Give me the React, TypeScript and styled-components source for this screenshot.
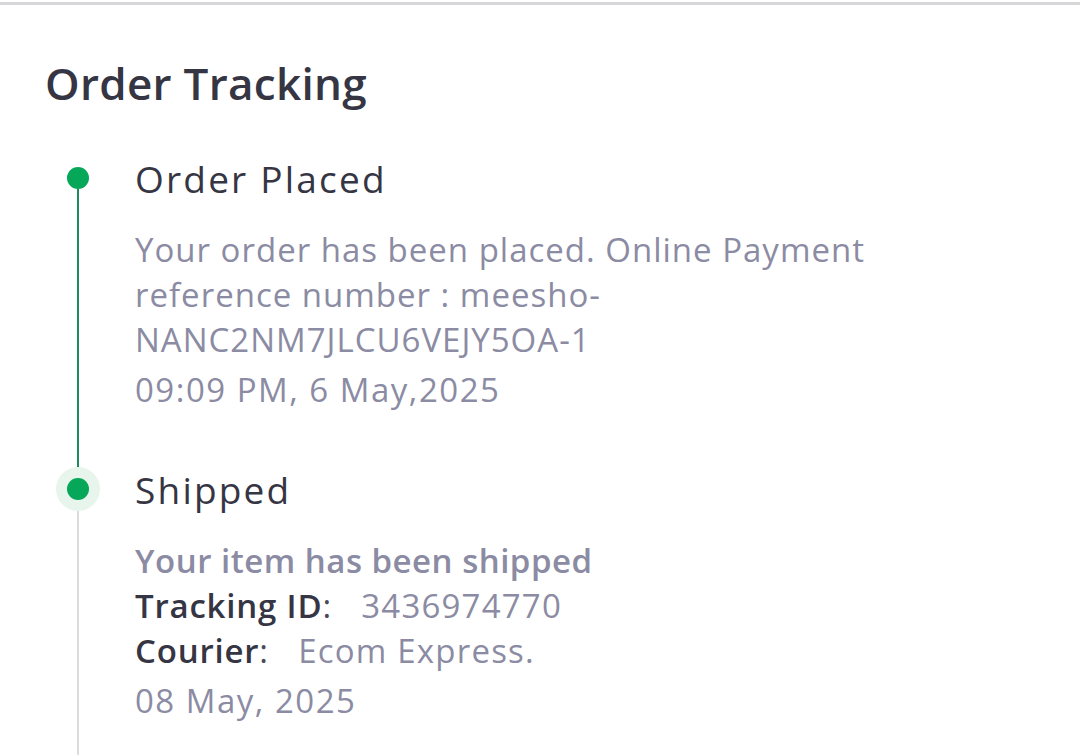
import styled, { createGlobalStyle } from "styled-components";

const GlobalStyle = createGlobalStyle`
  html, body {
    margin: 0;
    padding: 0;
    background: #ffffff;
  }
  body {
    font-family: "Open Sans", "Noto Sans", sans-serif;
    color: #353543;
  }
`;

const Page = styled.div`
  width: 1080px;
  min-height: 753px;
  border-top: 3px solid #d6d6d9;
  margin-top: 2px;
  box-sizing: border-box;
  padding: 50px 0 0 45px;
  overflow: hidden;
`;

const Title = styled.h1`
  margin: 0;
  font-size: 44px;
  line-height: 56px;
  font-weight: 600;
  letter-spacing: 0.3px;
  color: #353543;
`;

const Timeline = styled.div`
  display: flex;
  flex-direction: column;
  margin-top: 46px;
`;

const Step = styled.div`
  display: grid;
  grid-template-columns: 66px 1fr;
  column-gap: 24px;
`;

const Rail = styled.div`
  display: flex;
  flex-direction: column;
  align-items: center;
`;

const Segment = styled.div<{ $color: string; $height?: number }>`
  width: 2px;
  background: ${(p) => p.$color};
  ${(p) => (p.$height !== undefined ? `height: ${p.$height}px;` : "flex: 1;")}
`;

const Dot = styled.div<{ $halo?: boolean }>`
  width: 22px;
  height: 22px;
  border-radius: 50%;
  background: #06a759;
  flex-shrink: 0;
  box-shadow: ${(p) => (p.$halo ? "0 0 0 11px #e7f5ed" : "none")};
  position: relative;
  z-index: 1;
`;

const Body = styled.div<{ $pad: number }>`
  padding-bottom: ${(p) => p.$pad}px;
  max-width: 770px;
`;

const StepTitle = styled.div`
  font-size: 37px;
  line-height: 44px;
  font-weight: 500;
  letter-spacing: 2.2px;
  color: #353543;
`;

const Desc = styled.div<{ $strong?: boolean }>`
  margin-top: 26px;
  font-size: 33px;
  line-height: 45px;
  font-weight: ${(p) => (p.$strong ? 600 : 400)};
  letter-spacing: ${(p) => (p.$strong ? 0.5 : 1)}px;
  color: #8b8ba3;
`;

const InfoRow = styled.div`
  font-size: 33px;
  line-height: 45px;
  letter-spacing: 1.2px;
  color: #8b8ba3;
`;

const Label = styled.span`
  color: #353543;
  font-weight: 600;
  letter-spacing: 0.8px;
`;

const Colon = styled.span`
  color: #4a4a58;
  margin-right: 29px;
`;

const Stamp = styled.div`
  margin-top: 5px;
  font-size: 33px;
  line-height: 45px;
  letter-spacing: 1.5px;
  color: #8b8ba3;
`;

export default function App() {
  return (
    <>
      <GlobalStyle />
      <Page>
        <Title>Order Tracking</Title>
        <Timeline>
          <Step>
            <Rail>
              <Segment $color="transparent" $height={10} />
              <Dot />
              <Segment $color="#1e8a5f" />
            </Rail>
            <Body $pad={56}>
              <StepTitle>Order Placed</StepTitle>
              <Desc>
                Your order has been placed. Online Payment reference number : meesho-NANC2NM7JLCU6VEJY5OA-1
              </Desc>
              <Stamp>09:09 PM, 6 May,2025</Stamp>
            </Body>
          </Step>
          <Step>
            <Rail>
              <Segment $color="#1e8a5f" $height={10} />
              <Dot $halo />
              <Segment $color="#dcdce0" />
            </Rail>
            <Body $pad={60}>
              <StepTitle>Shipped</StepTitle>
              <Desc $strong>Your item has been shipped</Desc>
              <InfoRow>
                <Label>Tracking ID</Label>
                <Colon>:</Colon>
                3436974770
              </InfoRow>
              <InfoRow>
                <Label>Courier</Label>
                <Colon>:</Colon>
                Ecom Express.
              </InfoRow>
              <Stamp>08 May, 2025</Stamp>
            </Body>
          </Step>
        </Timeline>
      </Page>
    </>
  );
}
